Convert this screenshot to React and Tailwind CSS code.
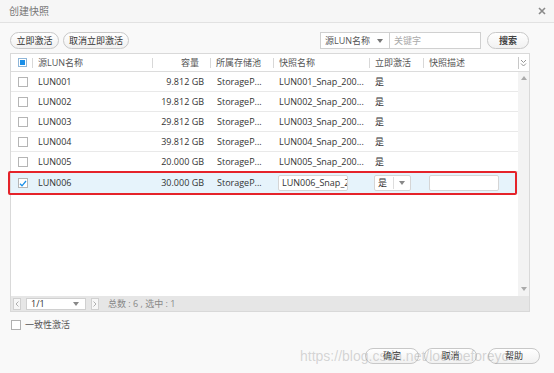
import React from "react";

const rows = [
  { name: "LUN001", cap: "9.812 GB", snap: "LUN001_Snap_200..." },
  { name: "LUN002", cap: "19.812 GB", snap: "LUN002_Snap_200..." },
  { name: "LUN003", cap: "29.812 GB", snap: "LUN003_Snap_200..." },
  { name: "LUN004", cap: "39.812 GB", snap: "LUN004_Snap_200..." },
  { name: "LUN005", cap: "20.000 GB", snap: "LUN005_Snap_200..." },
];

const cols = "grid grid-cols-[21px_120px_58px_63px_96px_54px_95px]";

function Box({ children }) {
  return (
    <div className="w-[10px] h-[10px] border border-[#b5b5b5] bg-white flex items-center justify-center">
      {children}
    </div>
  );
}

function Btn({ children, w }) {
  return (
    <div
      className={`${w} h-full rounded-full border border-[#c8c8c8] bg-gradient-to-b from-white to-[#f1f1f1] flex items-center justify-center text-[#333] text-[9px]`}
    >
      {children}
    </div>
  );
}

function HeadCell({ children, right, first }) {
  return (
    <div className="relative flex items-center h-full">
      {!first && <div className="absolute left-0 top-[4px] h-[10px] w-px bg-[#d8d8d8]" />}
      <div className={`w-full ${right ? "text-right pr-[11px]" : "pl-[6px]"} text-[#555]`}>{children}</div>
    </div>
  );
}

export default function App() {
  return (
    <div className="relative w-[554px] h-[373px] overflow-hidden bg-[#f9f9f9] font-['Open_Sans','Noto_Sans_CJK_SC',sans-serif] text-[9px] text-[#333]">
      {/* title */}
      <div className="h-[23px] border-b border-[#e2e2e2] bg-[#f6f6f6] flex items-center justify-between pl-[9px] pr-[8px]">
        <span className="text-[10px] text-[#777]">创建快照</span>
        <svg width="8" height="8" viewBox="0 0 8 8">
          <path d="M1 1L7 7M7 1L1 7" stroke="#8a8a8a" strokeWidth="1.6" />
        </svg>
      </div>

      {/* toolbar */}
      <div className="mt-[9px] ml-[10px] w-[519px] h-[17px] flex justify-between">
        <div className="flex gap-[4px] h-full">
          <Btn w="w-[49px]">立即激活</Btn>
          <Btn w="w-[66px]">取消立即激活</Btn>
        </div>
        <div className="flex h-full">
          <div className="w-[70px] h-full border border-[#d0d0d0] bg-white flex items-center justify-between pl-[4px] pr-[6px] text-[#555]">
            <span>源LUN名称</span>
            <svg width="6" height="4" viewBox="0 0 6 4"><path d="M0 0H6L3 4Z" fill="#777" /></svg>
          </div>
          <div className="w-[91px] h-full border border-l-0 border-[#d0d0d0] bg-white flex items-center pl-[4px] text-[#aaa]">
            关键字
          </div>
          <div className="ml-[6px] h-full">
            <Btn w="w-[42px]"><span className="font-bold text-[#444]">搜索</span></Btn>
          </div>
        </div>
      </div>

      {/* table */}
      <div className="mt-[4px] ml-[10px] w-[520px] border border-[#d9d9d9] bg-white flex flex-col">
        {/* header */}
        <div className="flex h-[18px] border-b border-[#dcdcdc] bg-white">
          <div className={`${cols} h-full`}>
            <div className="flex items-center justify-center pl-[1px]">
              <div className="w-[9px] h-[9px] border border-[#8fb6d8] bg-white flex items-center justify-center">
                <div className="w-[5px] h-[5px] bg-[#1a8fe8]" />
              </div>
            </div>
            <HeadCell>源LUN名称</HeadCell>
            <HeadCell right>容量</HeadCell>
            <HeadCell>所属存储池</HeadCell>
            <HeadCell>快照名称</HeadCell>
            <HeadCell>立即激活</HeadCell>
            <HeadCell>快照描述</HeadCell>
          </div>
          <div className="relative flex-1 flex items-center justify-center">
            <div className="absolute left-0 top-[3px] h-[12px] w-px bg-[#c8c8c8]" />
            <svg width="7" height="8" viewBox="0 0 7 8">
              <path d="M1 1L3.5 3.5L6 1M1 4.5L3.5 7L6 4.5" stroke="#888" strokeWidth="0.9" fill="none" />
            </svg>
          </div>
        </div>

        {/* body */}
        <div className="flex h-[224px]">
          <div className="w-[507px] flex flex-col">
            {rows.map((r) => (
              <div key={r.name} className={`${cols} h-[20px] border-b border-[#e9e9e9] items-center`}>
                <div className="flex justify-center pl-[3px]">
                  <Box />
                </div>
                <div className="pl-[6px]">{r.name}</div>
                <div className="text-right pr-[6px]">{r.cap}</div>
                <div className="pl-[7px]">StorageP...</div>
                <div className="pl-[6px]">{r.snap}</div>
                <div className="pl-[6px]">是</div>
                <div />
              </div>
            ))}
            <div className="relative">
              <div className={`${cols} h-[22px] bg-[#e6f3fb] items-center`}>
                <div className="flex justify-center pl-[3px]">
                  <Box>
                    <svg width="8" height="7" viewBox="0 0 8 7">
                      <path d="M1 3.8L3 5.8L7 1" stroke="#1a8fe8" strokeWidth="1.3" fill="none" />
                    </svg>
                  </Box>
                </div>
                <div className="pl-[6px]">LUN006</div>
                <div className="text-right pr-[6px]">30.000 GB</div>
                <div className="pl-[7px]">StorageP...</div>
                <div className="pl-[5px]">
                  <div className="w-[70px] h-[16px] border border-[#d5d5d5] rounded-[2px] bg-white flex items-center pl-[3px] overflow-hidden whitespace-nowrap">
                    LUN006_Snap_2
                  </div>
                </div>
                <div className="pl-[5px]">
                  <div className="w-[37px] h-[16px] border border-[#d5d5d5] rounded-[2px] bg-white flex items-center">
                    <span className="pl-[3px] w-[18px]">是</span>
                    <div className="h-[12px] w-px bg-[#ddd]" />
                    <div className="flex-1 flex justify-center">
                      <svg width="6" height="4" viewBox="0 0 6 4"><path d="M0 0H6L3 4Z" fill="#888" /></svg>
                    </div>
                  </div>
                </div>
                <div className="pl-[6px]">
                  <div className="w-[70px] h-[16px] border border-[#d5d5d5] rounded-[2px] bg-white" />
                </div>
              </div>
              <div className="absolute left-[-3px] top-[-1px] w-[509px] h-[24px] border-2 border-[#e5232a] rounded-[2px] pointer-events-none" />
            </div>
          </div>
          <div className="flex-1 bg-[#f3f3f3] flex flex-col items-center justify-between pt-[4px] pb-[5px]">
            <svg width="6" height="4" viewBox="0 0 6 4"><path d="M0 4H6L3 0Z" fill="#aaa" /></svg>
            <svg width="6" height="4" viewBox="0 0 6 4"><path d="M0 0H6L3 4Z" fill="#aaa" /></svg>
          </div>
        </div>

        {/* pager */}
        <div className="h-[15px] bg-[#e6e6e6] flex items-center pl-[2px] gap-[5px] text-[#777]">
          <div className="w-[8px] h-[12px] border border-[#d0d0d0] bg-[#f7f7f7] flex items-center justify-center">
            <svg width="4" height="6" viewBox="0 0 4 6"><path d="M3.5 0.5L1 3L3.5 5.5" stroke="#b0b0b0" fill="none" /></svg>
          </div>
          <div className="w-[60px] h-[12px] border border-[#d0d0d0] bg-white flex items-center justify-between pl-[4px] pr-[6px] text-[#333]">
            <span>1/1</span>
            <svg width="6" height="4" viewBox="0 0 6 4"><path d="M0 0H6L3 4Z" fill="#888" /></svg>
          </div>
          <div className="w-[8px] h-[12px] border border-[#d0d0d0] bg-[#f7f7f7] flex items-center justify-center">
            <svg width="4" height="6" viewBox="0 0 4 6"><path d="M0.5 0.5L3 3L0.5 5.5" stroke="#b0b0b0" fill="none" /></svg>
          </div>
          <span className="ml-[4px] text-[#888]">总数 : 6 , 选中 : 1</span>
        </div>
      </div>

      {/* consistency */}
      <div className="mt-[6px] ml-[11px] flex items-center gap-[4px] text-[#555]">
        <div className="w-[10px] h-[10px] border border-[#b0b0b0] bg-white" />
        <span>一致性激活</span>
      </div>

      {/* footer buttons */}
      <div className="absolute left-[365px] top-[348px] h-[16px] flex">
        <Btn w="w-[54px]">确定</Btn>
        <div className="ml-[5px] h-full"><Btn w="w-[53px]">取消</Btn></div>
        <div className="ml-[11px] h-full"><Btn w="w-[52px]">帮助</Btn></div>
      </div>

      {/* watermark */}
      <div className="absolute left-[300px] top-[346px] text-[14px] leading-[20px] font-['Liberation_Sans',sans-serif] text-[#9a9a9a]/40 whitespace-nowrap pointer-events-none">
        https://blog.csdn.net/lookbeforeyou
      </div>
    </div>
  );
}
